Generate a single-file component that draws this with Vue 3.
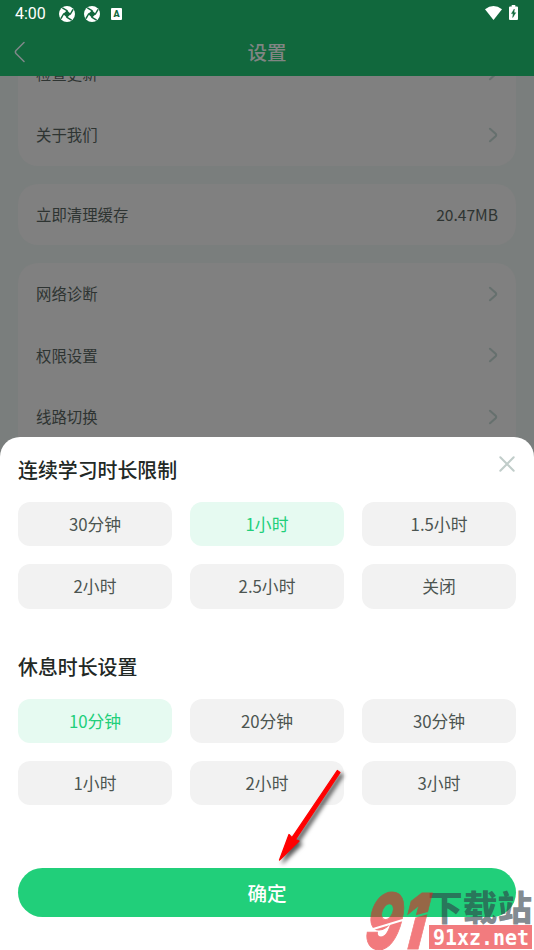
<script setup>
import { ref } from 'vue'

const groups = [
  { rows: [{ label: '检查更新' }, { label: '关于我们' }] },
  { rows: [{ label: '立即清理缓存', value: '20.47MB' }] },
  { rows: [{ label: '网络诊断' }, { label: '权限设置' }, { label: '线路切换' }] },
]
const sections = [
  { title: '连续学习时长限制', options: ['30分钟', '1小时', '1.5小时', '2小时', '2.5小时', '关闭'] },
  { title: '休息时长设置', options: ['10分钟', '20分钟', '30分钟', '1小时', '2小时', '3小时'] },
]
const selected = ref(['1小时', '10分钟'])
</script>

<template>
  <div class="screen">
    <header class="header">
      <div class="status">
        <span class="clock">4:00</span>
        <svg v-for="n in 2" :key="n" class="swirl" viewBox="0 0 16 16">
          <circle cx="8" cy="8" r="8" fill="#fff" />
          <path d="M8 4.200 11.800 8 8 11.800 4.200 8Z" fill="#11683d" />
          <path d="M8 4.600 3.800 2.200M11.400 8 13.800 3.800M8 11.400 12.200 13.800M4.600 8 2.200 12.200" stroke="#11683d" stroke-width="1.500" stroke-linecap="round" />
        </svg>
        <span class="badge">A</span>
        <svg class="wifi" viewBox="0 0 17 14"><path d="M0 3.2Q8.5-3 17 3.2L8.5 14Z" fill="#fff" /></svg>
        <svg class="battery" viewBox="0 0 9 15">
          <path d="M2.7 0h3.6v1.5H8q1 0 1 1V14q0 1-1 1H1q-1 0-1-1V2.500q0-1 1-1h1.700Z" fill="#fff" />
          <path d="M5.300 4 2.500 8.600h1.700L3.700 12.500 6.700 7.700H5Z" fill="#11683d" stroke="#11683d" stroke-width=".5" />
        </svg>
      </div>
      <div class="titlebar">
        <svg class="back" viewBox="0 0 12 22"><path d="M10 1.500 2 9.500Q.8 11 2 12.500L10 20.500" fill="none" stroke="#80888a" stroke-width="1.500" stroke-linecap="round" /></svg>
        <h1>设置</h1>
      </div>
    </header>
    <main class="content">
      <div class="list">
        <section v-for="(group, i) in groups" :key="i" class="card">
          <div v-for="row in group.rows" :key="row.label" class="row">
            <span class="label">{{ row.label }}</span>
            <span v-if="row.value" class="value">{{ row.value }}</span>
            <svg v-else class="chevron" viewBox="0 0 10 16"><path d="M2 1.800 7.600 6.800Q8.700 8 7.600 9.200L2 14.200" fill="none" stroke="#66706e" stroke-width="2.100" stroke-linecap="round" /></svg>
          </div>
        </section>
      </div>
    </main>
    <div class="sheet">
      <svg class="close" viewBox="0 0 16 16"><path d="M1.300 1.300 14.700 14.700M14.700 1.300 1.300 14.700" stroke="#c1cdca" stroke-width="2" stroke-linecap="round" /></svg>
      <section v-for="(section, i) in sections" :key="section.title" class="section">
        <h2>{{ section.title }}</h2>
        <div class="options">
          <button
            v-for="option in section.options"
            :key="option"
            class="option"
            :class="{ active: selected[i] === option }"
            @click="selected[i] = option"
          >{{ option }}</button>
        </div>
      </section>
      <button class="confirm">确定</button>
    </div>
    <svg class="arrow" viewBox="0 0 90 110">
      <path d="M67.300 10.500 70 12.500 25.500 79.500 29 81 9.500 100 19 74.500 22 77.700Z" fill="#f00" stroke="#f00" stroke-width="1.300" stroke-linejoin="round" />
    </svg>
    <div class="watermark">
      <svg class="mark" viewBox="0 0 64 62">
        <defs>
          <mask id="cut" maskUnits="userSpaceOnUse" x="-10" y="0" width="90" height="62">
            <rect x="-10" width="90" height="62" fill="#fff" />
            <path d="M6 42Q34 33 64 25" stroke="#000" stroke-width="2.200" fill="none" />
          </mask>
        </defs>
        <g mask="url(#cut)">
          <text transform="translate(-1 61) skewX(-8)" x="0" y="0" textLength="60" lengthAdjust="spacingAndGlyphs">91</text>
        </g>
      </svg>
      <div class="brand">
        <span class="name">下载站</span>
        <svg class="site" viewBox="0 0 103 24">
          <text x="4" y="19.500" textLength="96" lengthAdjust="spacingAndGlyphs">91xz.net</text>
        </svg>
      </div>
    </div>
  </div>
</template>

<style>
body { margin: 0; }
</style>

<style scoped>
.screen {
  position: relative;
  display: flex;
  flex-direction: column;
  width: 534px;
  height: 950px;
  overflow: hidden;
  background: #7a7e7d;
  font-family: "Noto Sans CJK SC", sans-serif;
}
.header { flex: none; height: 76px; background: #11683d; }
.status { display: flex; align-items: center; height: 28px; padding: 0 16px 0 15px; }
.clock { width: 44px; color: #fff; font: 400 16px/28px Roboto, sans-serif; }
.swirl { width: 16px; height: 16px; margin-top: -1px; margin-right: 9px; }
.badge {
  width: 11px;
  height: 12px;
  margin-left: 2px;
  border-radius: 1px;
  background: #fff;
  color: #11683d;
  font: 900 9px/12px Roboto, sans-serif;
  text-align: center;
}
.wifi { width: 17px; height: 14px; margin-left: auto; margin-right: 7px; margin-top: -2px; }
.battery { width: 9px; height: 15px; margin-top: -3px; }
.titlebar { display: flex; align-items: center; height: 48px; padding: 0 14px; }
.back { width: 12px; height: 22px; margin-top: -1px; }
.titlebar h1 {
  flex: 1;
  margin: 0 12px 0 0;
  color: #808583;
  font-size: 19.5px;
  font-weight: 500;
  line-height: 48px;
  text-align: center;
}
.content { display: flex; flex-direction: column; justify-content: flex-end; height: 371.500px; overflow: hidden; flex: none; }
.list { display: flex; flex-direction: column; gap: 18px; padding: 0 18px; }
.card { padding: 0 18px; border-radius: 20px; background: #808080; }
.card:last-child { border-bottom-left-radius: 0; border-bottom-right-radius: 0; }
.row {
  display: flex;
  align-items: center;
  justify-content: space-between;
  height: 61.5px;
  color: #2e3432;
  font-size: 15.4px;
}
.label { padding-bottom: 1px; }
.value { font-size: 15.6px; }
.chevron { width: 10px; height: 16px; }
.sheet {
  position: absolute;
  left: 0;
  right: 0;
  top: 437px;
  bottom: 0;
  padding: 18px 18px 0;
  border-radius: 20px 20px 0 0;
  background: #fff;
}
.close { position: absolute; top: 19px; right: 19px; width: 16px; height: 16px; }
.section { height: 196.700px; }
h2 { margin: 0 0 17px; color: #222825; font-size: 19.9px; font-weight: 500; line-height: 30px; }
.options { display: grid; grid-template-columns: repeat(3, 1fr); gap: 18px; }
.option {
  height: 44.3px;
  padding: 0;
  border: 0;
  border-radius: 12px;
  background: #f2f2f2;
  color: #4c5551;
  font: 400 16.8px/44px "Noto Sans CJK SC", sans-serif;
}
.option.active { background: #e6faf1; color: #21cf7a; }
.confirm {
  display: block;
  width: 100%;
  height: 49px;
  margin-top: 19.400px;
  padding: 0;
  border: 0;
  border-radius: 25px;
  background: #21cf7a;
  color: #fff;
  font: 500 19.6px/49px "Noto Sans CJK SC", sans-serif;
}
.arrow {
  position: absolute;
  left: 270px;
  top: 760px;
  width: 90px;
  height: 110px;
  filter: drop-shadow(3px 3px 2px rgba(0, 0, 0, .65));
}
.watermark { position: absolute; right: 0; bottom: 0; display: flex; width: 170px; height: 62px; }
.mark { flex: none; width: 64px; height: 62px; overflow: visible; opacity: .59; }
.mark text { font: italic 900 77px Inter, sans-serif; fill: #e91f23; stroke: #e91f23; stroke-width: 1px; }
.brand { display: flex; flex-direction: column; width: 106px; }
.name {
  height: 35px;
  margin-bottom: 2px;
  color: rgba(47, 60, 70, .61);
  font-size: 34.7px;
  font-weight: 900;
  line-height: 36px;
  white-space: nowrap;
}
.site {
  width: 103px;
  height: 24px;
  margin-left: 1px;
  background: rgba(233, 31, 35, .59);
}
.site text { fill: #fff; font: 700 22px "DejaVu Sans Mono", monospace; }
</style>
